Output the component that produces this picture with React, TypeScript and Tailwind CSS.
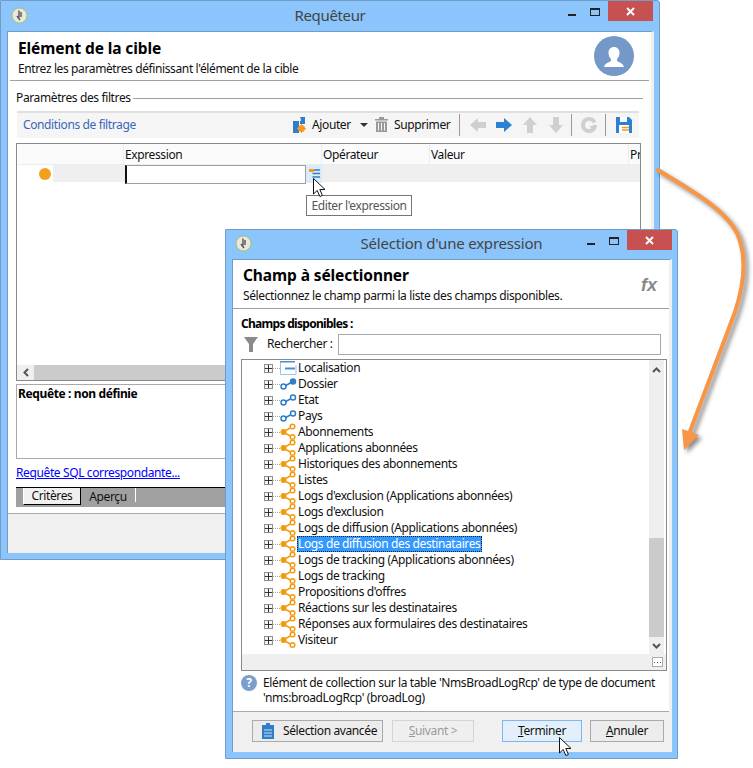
import React from "react";

const treeRows: { label: string; icon: "form" | "linkFilled" | "link" | "collection"; selected?: boolean }[] = [
  { label: "Localisation", icon: "form" },
  { label: "Dossier", icon: "linkFilled" },
  { label: "Etat", icon: "link" },
  { label: "Pays", icon: "link" },
  { label: "Abonnements", icon: "collection" },
  { label: "Applications abonnées", icon: "collection" },
  { label: "Historiques des abonnements", icon: "collection" },
  { label: "Listes", icon: "collection" },
  { label: "Logs d'exclusion (Applications abonnées)", icon: "collection" },
  { label: "Logs d'exclusion", icon: "collection" },
  { label: "Logs de diffusion (Applications abonnées)", icon: "collection" },
  { label: "Logs de diffusion des destinataires", icon: "collection", selected: true },
  { label: "Logs de tracking (Applications abonnées)", icon: "collection" },
  { label: "Logs de tracking", icon: "collection" },
  { label: "Propositions d'offres", icon: "collection" },
  { label: "Réactions sur les destinataires", icon: "collection" },
  { label: "Réponses aux formulaires des destinataires", icon: "collection" },
  { label: "Visiteur", icon: "collection" },
];

function AppIcon() {
  return (
    <svg width="17" height="17" viewBox="0 0 17 17" className="shrink-0">
      <circle cx="8.5" cy="8.5" r="7.5" fill="#e8e8e0" stroke="#a5c46a" strokeWidth="1" />
      <path d="M8 3.5v7M10 5v5M6 9l3 4" stroke="#555" strokeWidth="1.4" fill="none" />
    </svg>
  );
}

function WindowControls({ minLeft, maxLeft, closeLeft }: { minLeft: string; maxLeft: string; closeLeft: string }) {
  return (
    <>
      <div className={`absolute top-[13px] h-[2px] w-[8px] bg-[#222] ${minLeft}`} />
      <div className={`absolute top-[7px] h-[8px] w-[10px] border border-t-2 border-[#222] ${maxLeft}`} />
      <div className={`absolute top-0 flex h-[20px] w-[45px] items-center justify-center bg-[#c75050] ${closeLeft}`}>
        <svg width="9" height="9" viewBox="0 0 9 9">
          <path d="M1 1l7 7M8 1l-7 7" stroke="#fff" strokeWidth="2" />
        </svg>
      </div>
    </>
  );
}

function AddIcon() {
  return (
    <svg width="13" height="16" viewBox="0 0 13 16" className="shrink-0">
      <path d="M7 0h5v7H7zM0 4h6v12H0z" fill="#2f7fc8" />
      <path d="M6 4l2-4v4z" fill="#cfe2f3" />
      <circle cx="8.5" cy="11.5" r="3.5" fill="#f59a23" />
      <path d="M8.5 7v9M4 11.5h9" stroke="#f59a23" strokeWidth="1" />
    </svg>
  );
}

function TrashIcon() {
  return (
    <svg width="13" height="15" viewBox="0 0 13 15" className="shrink-0">
      <path d="M0 2h13v1.500H0zM4 0h5v2H4z" fill="#9a9a9a" />
      <path d="M1 4.500h11V15H1z" fill="#9a9a9a" />
      <path d="M3.500 6v7.500M6.500 6v7.500M9.500 6v7.500" stroke="#f5f5f5" strokeWidth="1" />
    </svg>
  );
}

function ArrowIcon({ dir, color }: { dir: "left" | "right" | "up" | "down"; color: string }) {
  const horizontal = dir === "left" || dir === "right";
  const d = {
    right: "M0 4h8V0l8 7-8 7v-4H0z",
    left: "M16 4H8V0L0 7l8 7v-4h8z",
    up: "M4 16V8H0l7-8 7 8h-4v8z",
    down: "M4 0v8H0l7 8 7-8h-4V0z",
  }[dir];
  return (
    <svg width={horizontal ? 16 : 14} height={horizontal ? 14 : 16} viewBox={horizontal ? "0 0 16 14" : "0 0 14 16"} className="shrink-0">
      <path d={d} fill={color} />
    </svg>
  );
}

function RefreshIcon() {
  return (
    <svg width="16" height="16" viewBox="0 0 16 16" className="shrink-0">
      <circle cx="8" cy="8" r="6" fill="none" stroke="#cfcfcf" strokeWidth="4" />
      <path d="M8 7.500l8-3v3.500z" fill="#f5f5f5" />
      <path d="M8.500 9H16l-3.500 6z" fill="#cfcfcf" />
      <path d="M8 3.500l2.500 3" stroke="#f5f5f5" strokeWidth="1" />
    </svg>
  );
}

function SaveIcon() {
  return (
    <svg width="16" height="16" viewBox="0 0 16 16" className="shrink-0">
      <path d="M0 0h13l3 3v13H0z" fill="#2a82d0" />
      <path d="M4 0h7v5H4z" fill="#fff" />
      <path d="M3 8h10v8H3z" fill="#fff" />
      <path d="M6 10.500h7M6 13h7" stroke="#f59a23" strokeWidth="1.500" />
    </svg>
  );
}

function TreeIcon({ type }: { type: string }) {
  if (type === "form") {
    return (
      <svg width="17" height="14" viewBox="0 0 17 14" className="shrink-0">
        <path d="M.5 1v12.500h15.500V4" fill="none" stroke="#9fc5e8" />
        <path d="M0 .750h15" stroke="#4a90d0" strokeWidth="1.500" />
        <path d="M5 7.500h10" stroke="#4a90d0" strokeWidth="2" />
      </svg>
    );
  }
  if (type === "collection") {
    return (
      <svg width="17" height="18" viewBox="0 0 17 18" className="shrink-0 overflow-visible">
        <path d="M3 9l9-5M3 9l9 5" stroke="#f39c12" strokeWidth="1.500" />
        <circle cx="3.500" cy="9" r="3" fill="#f39c12" />
        <circle cx="12.500" cy="3.500" r="2.300" fill="#fff" stroke="#f39c12" strokeWidth="1.500" />
        <circle cx="12.500" cy="14" r="2.300" fill="#fff" stroke="#f39c12" strokeWidth="1.500" />
      </svg>
    );
  }
  return (
    <svg width="17" height="14" viewBox="0 0 17 14" className="shrink-0">
      <path d="M5 9l7-4" stroke="#2f7fc8" strokeWidth="1.500" />
      <circle cx="3.500" cy="9.500" r="2.500" fill="#fff" stroke="#2f7fc8" strokeWidth="1.500" />
      <circle cx="13" cy="4.500" r="2.500" fill={type === "linkFilled" ? "#2f7fc8" : "#fff"} stroke="#2f7fc8" strokeWidth="1.500" />
    </svg>
  );
}

function Cursor({ className }: { className: string }) {
  return (
    <svg width="13" height="19" viewBox="0 0 13 19" className={`absolute ${className}`}>
      <path d="M.5 .5v15.500l3.700-3.500 2.700 6 2.500-1.100-2.600-5.900h5.200z" fill="#fff" stroke="#111" strokeWidth="1" />
    </svg>
  );
}

function Button({ width, children, className = "" }: { width: string; children: React.ReactNode; className?: string }) {
  return (
    <div className={`flex h-[22px] items-center border ${width} ${className}`}>{children}</div>
  );
}

export default function App() {
  return (
    <div className="relative h-[768px] w-[753px] overflow-hidden bg-white font-['Noto_Sans',sans-serif] text-[12px] leading-[16px] tracking-[-0.38px] text-[#111]">
      {/* Requêteur */}
      <div className="absolute left-0 top-0 flex h-[560px] w-[660px] flex-col rounded-tr-[3px] border border-[#6f9dc8] bg-[#8bc5fb]">
        <div className="relative h-[30px] shrink-0">
          <div className="absolute left-[10px] top-[6px]"><AppIcon /></div>
          <div className="pt-[4px] text-center text-[15px] leading-[20px] tracking-[-0.35px] text-[#444]">Requêteur</div>
          <WindowControls minLeft="left-[567px]" maxLeft="left-[589px]" closeLeft="left-[607px]" />
        </div>
        <div className="ml-[6px] flex h-[522px] w-[647px] flex-col border-l border-t border-r-[3px] border-l-[#6f9dc8] border-t-[#6f9dc8] border-r-[#f0f0f0] bg-white">
          <div className="relative mx-[2px] h-[49px] shrink-0 border-b border-[#a0a0a0] pl-[8px] pt-[6px]">
            <div className="text-[15.500px] font-bold leading-[20px] tracking-[-0.1px] text-black">Elément de la cible</div>
            <div className="mt-[3px] text-[#111]">Entrez les paramètres définissant l'élément de la cible</div>
            <svg width="40" height="40" viewBox="0 0 40 40" className="absolute left-[584px] top-[4px]">
              <circle cx="20" cy="20" r="20" fill="#7498c7" />
              <path d="M20 11c3.500 0 5.500 2.500 5.500 6 0 2.500-1 4.500-2.500 6v2c2 1.500 6 2 7 6H10c1-4 5-4.500 7-6v-2c-1.500-1.500-2.500-3.500-2.500-6 0-3.500 2-6 5.500-6z" fill="#fff" />
            </svg>
          </div>
          <div className="mt-[9px] flex h-[16px] shrink-0 items-center pl-[8px] pr-[8px]">
            <span className="pr-[2px]">Paramètres des filtres</span>
            <div className="h-px flex-1 bg-[#a0a0a0]" />
          </div>
          <div className="ml-[9px] mt-[5px] flex h-[27px] w-[622px] shrink-0 items-center border-t-2 border-[#e0e0e0] bg-[#f5f5f5] pb-[2px] pl-[6px] pr-[7px]">
            <span className="text-[#3a66b8]">Conditions de filtrage</span>
            <div className="flex-1" />
            <AddIcon />
            <span className="ml-[6px] w-[44px]">Ajouter</span>
            <div className="ml-[4px] h-0 w-0 border-x-[4px] border-t-[4px] border-x-transparent border-t-[#333]" />
            <div className="ml-[7px]"><TrashIcon /></div>
            <span className="ml-[6px] w-[59px]">Supprimer</span>
            <div className="ml-[6px] h-[22px] w-px bg-[#999]" />
            <div className="ml-[10px]"><ArrowIcon dir="left" color="#cfcfcf" /></div>
            <div className="ml-[10px]"><ArrowIcon dir="right" color="#2a82d0" /></div>
            <div className="ml-[11px]"><ArrowIcon dir="up" color="#cfcfcf" /></div>
            <div className="ml-[12px]"><ArrowIcon dir="down" color="#cfcfcf" /></div>
            <div className="ml-[8px] h-[22px] w-px bg-[#999]" />
            <div className="ml-[9px]"><RefreshIcon /></div>
            <div className="ml-[8px] h-[22px] w-px bg-[#999]" />
            <div className="ml-[10px]"><SaveIcon /></div>
          </div>
          <div className="ml-[8px] mt-[5px] flex h-[238px] w-[625px] shrink-0 flex-col border border-[#8a8a8a]">
            <div className="flex h-[21px] shrink-0 border-b border-[#e6eef9] bg-[#fbfbfb] leading-[22px]">
              <div className="w-[107px] border-r border-[#e6eef9]" />
              <div className="w-[198px] border-r border-[#e6eef9] pl-px">Expression</div>
              <div className="w-[108px] border-r border-[#e6eef9] pl-px">Opérateur</div>
              <div className="w-[199px] border-r border-[#e6eef9] pl-px">Valeur</div>
              <div className="w-[11px] overflow-hidden pl-px">Pr</div>
            </div>
            <div className="flex h-[17px] shrink-0 bg-[#efefef]">
              <div className="flex w-[36px] items-center justify-end bg-white pr-[2px]">
                <div className="h-[12px] w-[12px] rounded-full bg-[#f2a01e]" />
              </div>
              <div className="w-[72px]" />
              <div className="h-[19px] w-[181px] border border-l-2 border-[#a0a0a0] border-l-[#111] bg-white" />
              <div className="flex h-[18px] w-[16px] items-center justify-center bg-[#dcebfa]">
                <svg width="11" height="10" viewBox="0 0 11 10">
                  <path d="M0 1.500h5" stroke="#f59a23" strokeWidth="3" />
                  <path d="M5 1h6M3.500 4.500h7.500M3.500 8h7.500" stroke="#2f7fc8" strokeWidth="1.500" />
                </svg>
              </div>
            </div>
            <div className="flex-1" />
            <div className="flex h-[15px] shrink-0 bg-[#cbcbcb]">
              <div className="flex w-[17px] items-center justify-center bg-[#efefef]">
                <svg width="6" height="9" viewBox="0 0 6 9"><path d="M5 1L1.500 4.500 5 8" fill="none" stroke="#555" strokeWidth="2" /></svg>
              </div>
            </div>
          </div>
          <div className="ml-[8px] mt-[3px] h-[75px] shrink-0 border border-[#aaa] pl-px pt-px font-bold text-black">Requête : non définie</div>
          <div className="ml-[8px] mt-[6px] h-[16px] shrink-0 text-[#0000ff] underline">Requête SQL correspondante...</div>
          <div className="ml-[8px] mt-[6px] flex h-[20px] shrink-0 border-t border-black bg-[#a0a0a0] pl-[7px]">
            <div className="h-[17px] w-[58px] border-b border-l border-r border-b-black border-l-white border-r-black bg-[#f0f0f0] text-center leading-[15px]">Critères</div>
            <div className="h-[14px] w-[55px] border-r border-white text-center leading-[18px]">Aperçu</div>
          </div>
          <div className="mt-[6px] flex-1 border-t border-[#aaa] bg-[#f0f0f0]" />
        </div>
      </div>

      {/* Tooltip + cursor of the first window */}
      <div className="absolute left-[306px] top-[195px] flex h-[21px] w-[106px] items-center justify-center border border-[#767676] bg-white text-[#555]">Editer l'expression</div>
      <Cursor className="left-[313px] top-[178px]" />

      {/* Sélection d'une expression */}
      <div className="absolute left-[225px] top-[229px] flex h-[530px] w-[453px] flex-col rounded-tr-[3px] border border-[#6f9dc8] bg-[#8bc5fb]">
        <div className="relative h-[29px] shrink-0">
          <div className="absolute left-[9px] top-[5px]"><AppIcon /></div>
          <div className="pt-[3px] text-center text-[15px] leading-[20px] tracking-[-0.2px] text-[#444]">Sélection d'une expression</div>
          <WindowControls minLeft="left-[361px]" maxLeft="left-[383px]" closeLeft="left-[401px]" />
        </div>
        <div className="ml-[6px] flex h-[493px] w-[440px] flex-col border-l border-t border-r-[3px] border-l-[#6f9dc8] border-t-[#6f9dc8] border-r-[#f0f0f0] bg-white">
          <div className="flex h-[49px] shrink-0 items-center justify-between border-b border-[#a0a0a0] pl-[10px] pr-[12px] pt-[1px]">
            <div>
              <div className="text-[15.500px] font-bold leading-[20px] tracking-[-0.1px] text-black">Champ à sélectionner</div>
              <div className="mt-[3px]">Sélectionnez le champ parmi la liste des champs disponibles.</div>
            </div>
            <span className="font-['Liberation_Sans',sans-serif] text-[18px] font-bold italic leading-[20px] tracking-normal text-[#888]">fx</span>
          </div>
          <div className="ml-[8px] mt-[7px] h-[16px] shrink-0 font-bold tracking-[-0.7px] text-black">Champs disponibles :</div>
          <div className="ml-[11px] mt-[2px] flex h-[21px] shrink-0 items-center">
            <svg width="14" height="15" viewBox="0 0 14 15" className="shrink-0">
              <path d="M0 0h14L9 7v8H5V7z" fill="#8a8a8a" />
            </svg>
            <span className="mb-[2px] ml-[9px] w-[71px]">Rechercher :</span>
            <div className="h-[21px] w-[323px] border border-[#aaa] bg-white" />
          </div>
          <div className="ml-[8px] mt-[4px] flex h-[312px] w-[426px] shrink-0 flex-col border border-[#8a8a8a]">
            <div className="flex h-[294px] shrink-0">
              <div className="flex-1 overflow-hidden">
                {treeRows.map((row) => (
                  <div key={row.label} className="flex h-[16px] items-center pl-[22px]">
                    <div className="flex h-[9px] w-[9px] shrink-0 items-center justify-center border border-[#919191] bg-[#f4f4f4]">
                      <svg width="7" height="7" viewBox="0 0 7 7"><path d="M0 3.500h7M3.500 0v7" stroke="#333" strokeWidth="1" /></svg>
                    </div>
                    <div className="h-px w-[7px] shrink-0 border-t border-dotted border-[#aaa]" />
                    <TreeIcon type={row.icon} />
                    {row.selected ? (
                      <span className="border border-dotted border-[#123] bg-[#3399ff] pr-px leading-[14px] text-white">{row.label}</span>
                    ) : (
                      <span className="ml-px">{row.label}</span>
                    )}
                  </div>
                ))}
              </div>
              <div className="mr-[2px] flex w-[15px] shrink-0 flex-col items-center bg-[#efefef]">
                <svg width="9" height="6" viewBox="0 0 9 6" className="mt-[7px]"><path d="M1 5l3.500-3.500L8 5" fill="none" stroke="#555" strokeWidth="2" /></svg>
                <div className="mt-[165px] h-[99px] w-[15px] bg-[#cbcbcb]" />
                <svg width="9" height="6" viewBox="0 0 9 6" className="mt-[6px]"><path d="M1 1l3.500 3.500L8 1" fill="none" stroke="#555" strokeWidth="2" /></svg>
              </div>
            </div>
            <div className="flex flex-1 items-center justify-end bg-[#efefef] pr-[3px]">
              <div className="flex h-[10px] w-[11px] items-center justify-center border border-[#aaa] bg-white">
                <svg width="7" height="1" viewBox="0 0 7 1"><path d="M0 .5h7" stroke="#555" strokeDasharray="1 2" /></svg>
              </div>
            </div>
          </div>
          <div className="flex h-[40px] shrink-0 items-start pl-[8px] pt-[4px]">
            <div className="flex h-[16px] w-[16px] shrink-0 items-center justify-center rounded-full bg-[#7b9fcc] text-[12px] font-bold leading-none tracking-normal text-white">?</div>
            <div className="ml-[6px] w-[410px]">
              <div className="h-[15px] leading-[15px]">Elément de collection sur la table 'NmsBroadLogRcp' de type de document</div>
              <div className="h-[15px] leading-[15px]">'nms:broadLogRcp' (broadLog)</div>
            </div>
          </div>
          <div className="flex flex-1 items-start border-t border-[#aaa] bg-[#f0f0f0] pl-[19px] pt-[8px]">
            <Button width="w-[131px]" className="border-[#aaa] bg-[#ececec] pl-[9px]">
              <svg width="12" height="16" viewBox="0 0 12 16" className="mr-[9px] shrink-0">
                <path d="M0 2h12v14H0z" fill="#2f7fc8" />
                <path d="M4 0h4v3H4z" fill="#2f7fc8" />
                <path d="M2 7h8M2 10h8M2 13h8" stroke="#cfe2f3" strokeWidth="1" />
              </svg>
              Sélection avancée
            </Button>
            <Button width="w-[82px]" className="ml-[9px] justify-center border-[#d4d4d4] bg-[#efefef] text-[#9a9a9a]">
              <span><u>S</u>uivant &gt;</span>
            </Button>
            <Button width="w-[80px]" className="ml-[28px] justify-center border-[#7db7ee] bg-[#e3f0fc]">
              <span><u>T</u>erminer</span>
            </Button>
            <Button width="w-[74px]" className="ml-[8px] justify-center border-[#aaa] bg-[#ececec]">
              <span><u>A</u>nnuler</span>
            </Button>
          </div>
        </div>
      </div>
      <Cursor className="left-[559px] top-[737px]" />

      {/* annotation arrow drawn on top of the screenshot */}
      <svg width="753" height="768" viewBox="0 0 753 768" className="pointer-events-none absolute left-0 top-0 drop-shadow-[3px_3px_2px_rgba(0,0,0,0.45)]">
        <path d="M658 170C690 190 724 208 737 233C748 258 744 285 735 312L689 434" fill="none" stroke="#f79646" strokeWidth="4" strokeLinecap="round" />
        <path d="M682 429L684 450L699 435Z" fill="#f79646" />
      </svg>
    </div>
  );
}
